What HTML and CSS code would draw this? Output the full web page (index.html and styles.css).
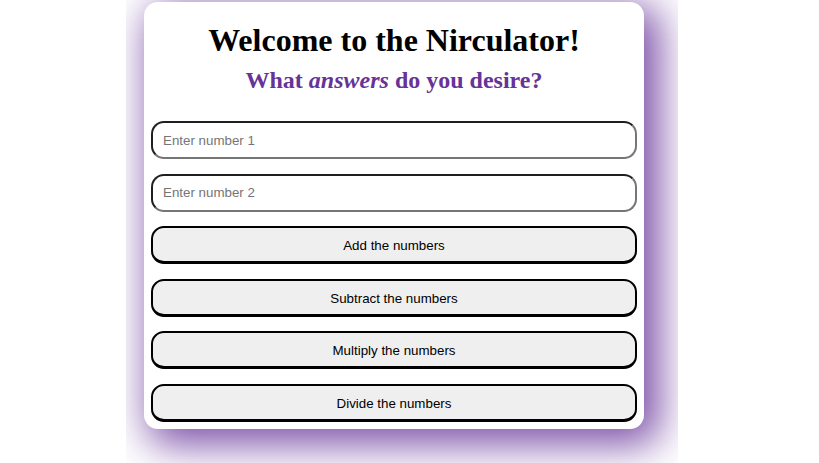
FILE: index.html
```html
<!DOCTYPE html>
<html lang="en">
<head>
<meta charset="utf-8">
<title>Nirculator</title>
<link rel="stylesheet" href="styles.css">
</head>
<body>
<div class="stage">
  <main class="card">
    <h1 class="title">Welcome to the Nirculator!</h1>
    <h2 class="subtitle">What <em>answers</em> do you desire?</h2>
    <form class="calc">
      <input class="field" type="text" placeholder="Enter number 1">
      <input class="field" type="text" placeholder="Enter number 2">
      <button class="op" type="button">Add the numbers</button>
      <button class="op" type="button">Subtract the numbers</button>
      <button class="op" type="button">Multiply the numbers</button>
      <button class="op" type="button">Divide the numbers</button>
    </form>
  </main>
</div>
</body>
</html>
```

FILE: styles.css
```css
html, body {
  margin: 0;
  padding: 0;
  background: #ffffff;
}

.stage {
  width: 552px;
  height: 463px;
  margin-left: 126px;
  box-sizing: border-box;
  padding: 2px 34px 0 18px;
  overflow: hidden;
}

.card {
  width: 500px;
  box-sizing: border-box;
  background: #ffffff;
  border-radius: 14px;
  padding: 20px 7px 7px;
  box-shadow: 10px 10px 40px 6px rgba(102, 51, 153, 0.85);
  text-align: center;
}

.title {
  font-family: "Liberation Serif", "Times New Roman", serif;
  font-size: 32px;
  font-weight: bold;
  color: #000;
  margin: 0 0 8px;
}

.subtitle {
  font-family: "Liberation Serif", "Times New Roman", serif;
  font-size: 24px;
  font-weight: bold;
  color: #663399;
  margin: 0 0 27px;
}

.subtitle em {
  font-style: italic;
}

.calc {
  display: flex;
  flex-direction: column;
  gap: 14.6px;
}

.field,
.op {
  font-family: "Liberation Sans", Arial, sans-serif;
  font-size: 13.33px;
  height: 38px;
  box-sizing: border-box;
  border-radius: 13px;
  margin: 0;
}

.field {
  background: #fff;
  border: 2px solid;
  border-color: #1f1f1f #767676 #767676 #1f1f1f;
  padding: 0 10px;
  color: #000;
  outline: none;
}

.field::placeholder {
  color: #757575;
}

.op {
  background: #efefef;
  border: 2px solid #000;
  border-bottom-width: 3px;
  color: #000;
  padding: 2px 0 0;
  cursor: pointer;
}
```
